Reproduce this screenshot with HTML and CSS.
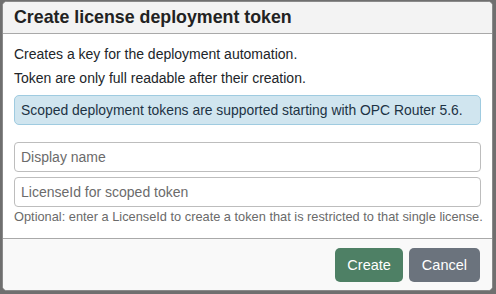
FILE: index.html
```html
<!DOCTYPE html>
<html>
<head>
<meta charset="utf-8">
<link rel="stylesheet" href="styles.css">
</head>
<body>
<div class="dialog">
  <div class="header">Create license deployment token</div>
  <div class="body">
    <p class="line">Creates a key for the deployment automation.</p>
    <p class="line">Token are only full readable after their creation.</p>
    <div class="alert">Scoped deployment tokens are supported starting with OPC Router 5.6.</div>
    <div class="field first"><input class="input" type="text" placeholder="Display name"></div>
    <div class="field"><input class="input" type="text" placeholder="LicenseId for scoped token"></div>
    <div class="help">Optional: enter a LicenseId to create a token that is restricted to that single license.</div>
  </div>
  <div class="footer">
    <button class="btn btn-create">Create</button>
    <button class="btn btn-cancel">Cancel</button>
  </div>
</div>
</body>
</html>
```
FILE: styles.css
```css
html, body {
  margin: 0;
  padding: 0;
  background: #6f6f6f;
  width: 496px;
  height: 294px;
  overflow: hidden;
}
body {
  padding: 1px 0 0 2px;
  box-sizing: border-box;
  font-family: "Liberation Sans", Arial, sans-serif;
  color: #212529;
}
.dialog {
  width: 491px;
  height: 290px;
  box-sizing: border-box;
  border: 1px solid #8a8a8a;
  border-radius: 5px;
  background: #fff;
  overflow: hidden;
  display: flex;
  flex-direction: column;
}
.header {
  background: #f3f3f3;
  border-bottom: 1px solid #a9a9a9;
  height: 32px;
  box-sizing: border-box;
  padding: 5px 11px 0;
  font-size: 17.8px;
  font-weight: bold;
  color: #222;
}
.body {
  padding: 11px 11px 0;
  flex: 1;
}
.line {
  margin: 0 0 6px;
  font-size: 14px;
  line-height: 18px;
}
.alert {
  margin-top: 8px;
  background: #d0e5ef;
  border: 1px solid #9fcbe0;
  border-radius: 5px;
  color: #1d3344;
  font-size: 13.9px;
  line-height: 18px;
  padding: 5px 6px;
  white-space: nowrap;
}
.field {
  margin-top: 5px;
}
.field.first {
  margin-top: 17px;
}
.input {
  display: block;
  width: 100%;
  box-sizing: border-box;
  height: 30px;
  border: 1px solid #bdbdbd;
  border-radius: 4px;
  padding: 0 6px;
  font-family: "Liberation Sans", Arial, sans-serif;
  font-size: 14px;
  color: #333;
  background: #fff;
  outline: none;
}
.input::placeholder {
  color: #6b6b6b;
}
.help {
  margin-top: 2px;
  font-size: 12.8px;
  line-height: 15px;
  color: #6a6a6a;
  white-space: nowrap;
}
.footer {
  height: 52px;
  box-sizing: border-box;
  border-top: 1px solid #a9a9a9;
  background: #f9f9f9;
  display: flex;
  justify-content: flex-end;
  align-items: center;
  gap: 6px;
  padding: 0 12px 0 0;
}
.btn {
  height: 34px;
  border: none;
  border-radius: 5px;
  color: #fff;
  font-family: "Liberation Sans", Arial, sans-serif;
  font-size: 14.5px;
  padding: 0 12px;
}
.btn-create {
  background: #4e8065;
}
.btn-cancel {
  background: #6b737d;
  padding: 0 13px;
}
```
